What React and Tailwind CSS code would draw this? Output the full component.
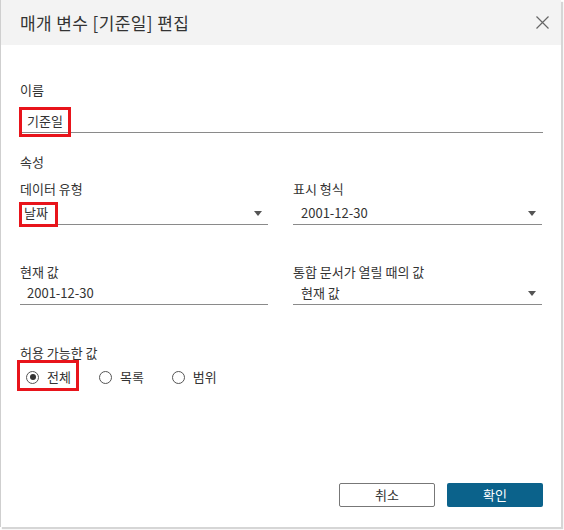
const font = { fontFamily: '"Noto Sans CJK KR", "Noto Sans", sans-serif' };

function Arrow() {
  return (
    <svg width="8" height="5" viewBox="0 0 8 5" className="shrink-0">
      <path d="M0 0 H8 L4 5 Z" fill="#555" />
    </svg>
  );
}

function Field({ value, dropdown, padLeft = 'pl-[7px]', mark, className = '' }) {
  return (
    <div className={`relative flex h-[23px] items-center justify-between border-b border-[#8a8a8a] pr-[6px] ${padLeft} ${className}`}>
      <span className="text-[13px] leading-[18px] text-[#333]">{value}</span>
      {dropdown && <Arrow />}
      {mark}
    </div>
  );
}

function Label({ children, className = '' }) {
  return <div className={`text-[13px] leading-[16px] text-[#333] ${className}`}>{children}</div>;
}

function Radio({ label, checked }) {
  return (
    <div className="flex items-center gap-[8px]">
      <span className="flex h-[13px] w-[13px] items-center justify-center rounded-full border border-[#555] bg-white">
        {checked && <span className="h-[6px] w-[6px] rounded-full bg-[#333]" />}
      </span>
      <span className="text-[13px] leading-[18px] text-[#333]">{label}</span>
    </div>
  );
}

export default function App() {
  return (
    <div className="h-[530px] w-[564px] bg-white" style={font}>
      <div className="flex h-[527px] w-[561px] flex-col border-l border-[#cfcfcf] bg-white shadow-[2px_2px_1px_rgba(0,0,0,0.16)]">
        <div className="flex h-[45px] shrink-0 items-center justify-between bg-[#f3f3f3] pl-[19px] pr-[12px]">
          <span className="text-[17px] leading-[20px] tracking-[0.4px] text-[#333]">매개 변수 [기준일] 편집</span>
          <svg width="13" height="13" viewBox="0 0 13 13">
            <path d="M0.5 0.5 L12.5 12.5 M12.5 0.5 L0.5 12.5" stroke="#666" strokeWidth="1.2" />
          </svg>
        </div>

        <div className="flex flex-1 flex-col pl-[19px] pr-[18px]">
          <Label className="mt-[37px]">이름</Label>
          <Field
            className="mt-[12px]"
            value="기준일"
            mark={<div className="absolute left-[-1px] top-[-3px] h-[30px] w-[52px] border-[3px] border-[#e8141b]" />}
          />

          <Label className="mt-[21px]">속성</Label>

          <div className="mt-[11px] grid grid-cols-[248px_249px] gap-x-[25px]">
            <div>
              <Label>데이터 유형</Label>
              <Field
                className="mt-[5px]"
                value="날짜"
                dropdown
                padLeft="pl-[4px]"
                mark={<div className="absolute left-[-1px] top-[0px] h-[25px] w-[39px] border-[3px] border-[#e8141b]" />}
              />
            </div>
            <div>
              <Label>표시 형식</Label>
              <Field className="mt-[5px]" value="2001-12-30" dropdown padLeft="pl-[8px]" />
            </div>

            <div className="mt-[39px]">
              <Label>현재 값</Label>
              <Field className="mt-[2px]" value="2001-12-30" />
            </div>
            <div className="mt-[39px]">
              <Label>통합 문서가 열릴 때의 값</Label>
              <Field className="mt-[2px]" value="현재 값" dropdown padLeft="pl-[8px]" />
            </div>
          </div>

          <Label className="mt-[40px]">허용 가능한 값</Label>
          <div className="relative mt-[5px] flex h-[22px] items-center gap-[28px] pl-[6px]">
            <Radio label="전체" checked />
            <Radio label="목록" />
            <Radio label="범위" />
            <div className="absolute left-[-3px] top-[-6px] h-[31px] w-[62px] border-[3px] border-[#e8141b]" />
          </div>

          <div className="mt-auto mb-[20px] flex justify-end gap-[12px]">
            <button className="h-[24px] w-[96px] rounded-[2px] border border-[#777] bg-white text-[13px] leading-[18px] text-[#333]">
              취소
            </button>
            <button className="h-[24px] w-[96px] rounded-[2px] bg-[#0b628b] text-[13px] leading-[18px] text-white">
              확인
            </button>
          </div>
        </div>
      </div>
    </div>
  );
}
